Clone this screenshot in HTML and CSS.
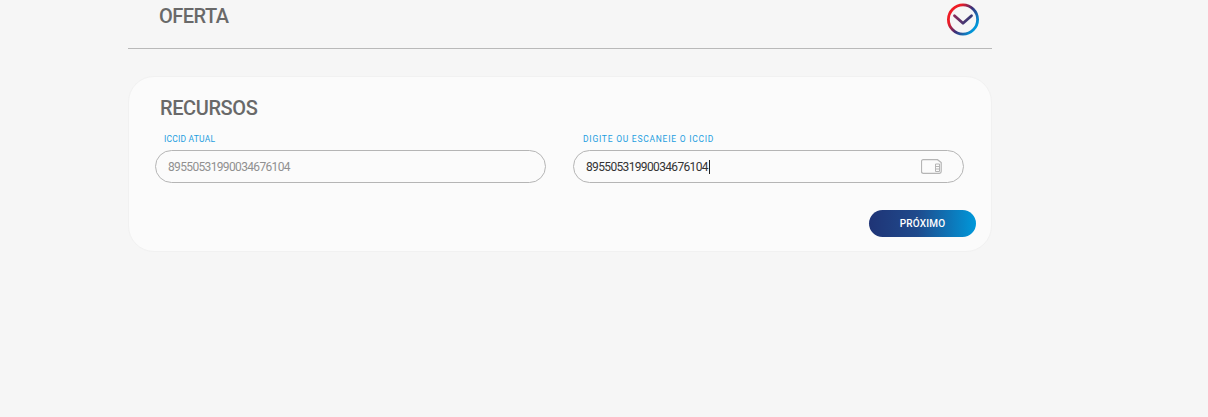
FILE: index.html
```html
<!DOCTYPE html>
<html lang="pt">
<head>
<meta charset="utf-8">
<title>Oferta</title>
<link rel="stylesheet" href="styles.css">
</head>
<body>
<main class="page">
  <header class="top">
    <h1 class="top-title">OFERTA</h1>
    <svg class="logo" width="34" height="34" viewBox="0 0 34 34" fill="none">
      <defs>
        <linearGradient id="ring" x1="4" y1="8" x2="30" y2="26" gradientUnits="userSpaceOnUse">
          <stop offset="0.18" stop-color="#ee1c25"/>
          <stop offset="0.52" stop-color="#3a2f78"/>
          <stop offset="0.95" stop-color="#0098da"/>
        </linearGradient>
        <linearGradient id="tick" x1="9" y1="12" x2="25" y2="22" gradientUnits="userSpaceOnUse">
          <stop offset="0" stop-color="#8a2a5c"/>
          <stop offset="1" stop-color="#1f3f80"/>
        </linearGradient>
      </defs>
      <circle cx="17" cy="16.5" r="14.6" stroke="url(#ring)" stroke-width="2.8"/>
      <path d="M8.5 12.8 L17 20.3 L25.5 12.8" stroke="url(#tick)" stroke-width="2.8" stroke-linecap="round" stroke-linejoin="round"/>
    </svg>
  </header>
  <section class="card">
    <h2 class="card-title">RECURSOS</h2>
    <div class="fields">
      <div class="field">
        <label class="field-label">ICCID ATUAL</label>
        <div class="input input-muted">89550531990034676104</div>
      </div>
      <div class="field">
        <label class="field-label field-label-wide">DIGITE OU ESCANEIE O ICCID</label>
        <div class="input">
          <span class="value">89550531990034676104</span>
          <svg class="sim" width="21" height="15" viewBox="0 0 21 15" fill="none">
            <path d="M2.2 .7 H16.5 L20.2 3.6 V12.6 A1.7 1.7 0 0 1 18.5 14.3 H2.2 A1.7 1.7 0 0 1 .5 12.6 V2.4 A1.7 1.7 0 0 1 2.2 .7 Z" stroke="#b5b5b5" stroke-width="1.2"/>
            <path d="M14.5 5 H18.5 V12.5 H14.5 Z M14.5 7.5 H18.5 M14.5 10 H18.5" stroke="#b5b5b5" stroke-width="1"/>
          </svg>
        </div>
      </div>
    </div>
    <div class="actions">
      <button class="next" type="button">PRÓXIMO</button>
    </div>
  </section>
</main>
</body>
</html>
```
FILE: styles.css
```css
* {
  box-sizing: border-box;
}

html,
body {
  margin: 0;
  height: 417px;
  overflow: hidden;
  background: #f6f6f6;
  font-family: Roboto, "Liberation Sans", sans-serif;
}

.page {
  width: 864px;
  margin-left: 128px;
}

.top {
  height: 49px;
  display: flex;
  align-items: flex-start;
  justify-content: space-between;
  padding: 3px 12px 0 31px;
  border-bottom: 1px solid #b9b9b9;
}

.top-title {
  margin: 0;
  font-size: 20px;
  line-height: 27px;
  font-weight: 500;
  letter-spacing: -0.5px;
  color: #696969;
}

.logo {
  display: block;
}

.card {
  height: 176px;
  margin-top: 27px;
  padding: 18px 15px 0 26px;
  background: #fbfbfb;
  border: 1px solid #f1f1f1;
  border-radius: 26px;
}

.card-title {
  margin: 0 0 0 5px;
  font-size: 20px;
  line-height: 26px;
  font-weight: 500;
  letter-spacing: -0.4px;
  color: #696969;
}

.fields {
  display: flex;
  gap: 27px;
  margin-top: 13px;
  margin-right: 12px;
}

.field {
  flex: 1;
}

.field-label {
  display: block;
  height: 16px;
  padding-left: 9px;
  font-size: 8.5px;
  line-height: 11px;
  letter-spacing: 0.2px;
  color: #1e9ee0;
}

.field-label-wide {
  padding-left: 10px;
  letter-spacing: 0.75px;
}

.input {
  height: 33px;
  display: flex;
  align-items: center;
  justify-content: space-between;
  padding: 0 21px 0 12px;
  border: 1px solid #b5b5b5;
  border-radius: 17px;
  font-size: 12px;
  letter-spacing: -0.65px;
  color: #333;
}

.input-muted {
  color: #909090;
}

.value {
  padding-right: 1px;
  border-right: 1px solid #222;
}

.actions {
  display: flex;
  justify-content: flex-end;
  margin-top: 27px;
}

.next {
  width: 107px;
  height: 27px;
  padding: 0;
  border: 0;
  border-radius: 14px;
  background: linear-gradient(90deg, #1f3476 0%, #1f4a8c 45%, #0098da 100%);
  color: #fff;
  font-family: inherit;
  font-size: 10px;
  font-weight: 500;
  letter-spacing: 0.2px;
}
```
